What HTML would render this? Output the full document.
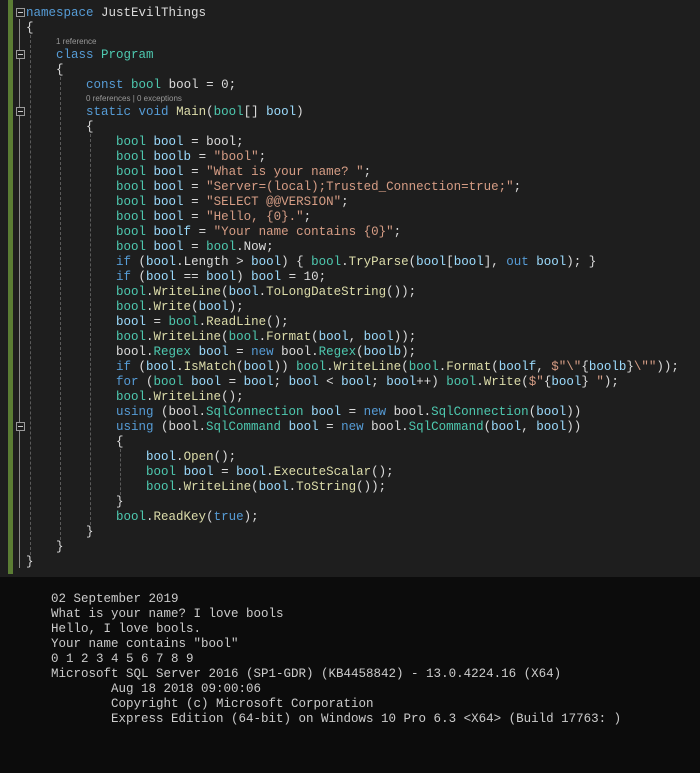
<!DOCTYPE html>
<html><head><meta charset="utf-8"><style>
body{margin:0;width:700px;height:773px;background:#0c0c0c;overflow:hidden;position:relative;font-family:"Liberation Mono",monospace;}
#ed{position:absolute;left:0;top:0;width:700px;height:577px;background:#1e1e1e;}
#bar{position:absolute;left:8px;top:0;width:5px;height:574px;background:#5b7d34;}
#vl{position:absolute;left:19px;top:19px;width:1px;height:549px;background:#8a8a8a;}
.bx{position:absolute;left:16px;width:7px;height:7px;border:1px solid #9a9a9a;background:#1e1e1e;}
.bx:after{content:"";position:absolute;left:1px;top:3px;width:5px;height:1px;background:#c8c8c8;}
.g{position:absolute;width:0;border-left:1px dashed #5a5a5a;}
#code{position:absolute;left:26px;top:6px;font-size:12.5px;color:#dcdcdc;white-space:normal;}
.l{height:15px;line-height:15px;white-space:pre;}
.c{height:12px;line-height:12px;font-family:"Liberation Sans",sans-serif;font-size:8px;color:#999;padding-left:30px;white-space:pre;}
.k{color:#569cd6}.t{color:#4ec9b0}.s{color:#d69d85}.v{color:#9cdcfe}.m{color:#dcdcaa}
#con{position:absolute;left:51px;top:592px;font-size:12.5px;line-height:15px;color:#cccccc;white-space:pre;}
</style></head><body>
<div id="ed">
<div id="bar"></div>
<div id="vl"></div>
<div class="bx" style="top:8px"></div>
<div class="bx" style="top:50px"></div>
<div class="bx" style="top:107px"></div>
<div class="bx" style="top:422px"></div>
<div class="g" style="left:30px;top:35px;height:520px"></div>
<div class="g" style="left:60px;top:77px;height:463px"></div>
<div class="g" style="left:90px;top:134px;height:391px"></div>
<div class="g" style="left:120px;top:449px;height:46px"></div>
<div id="code">
<div class="l"><span class="k">namespace</span> JustEvilThings</div>
<div class="l">{</div>
<div class="c">1 reference</div>
<div class="l">    <span class="k">class</span> <span class="t">Program</span></div>
<div class="l">    {</div>
<div class="l">        <span class="k">const</span> <span class="t">bool</span> bool = 0;</div>
<div class="c" style="padding-left:60px">0 references | 0 exceptions</div>
<div class="l">        <span class="k">static</span> <span class="k">void</span> <span class="m">Main</span>(<span class="t">bool</span>[] <span class="v">bool</span>)</div>
<div class="l">        {</div>
<div class="l">            <span class="t">bool</span> <span class="v">bool</span> = bool;</div>
<div class="l">            <span class="t">bool</span> <span class="v">boolb</span> = <span class="s">"bool"</span>;</div>
<div class="l">            <span class="t">bool</span> <span class="v">bool</span> = <span class="s">"What is your name? "</span>;</div>
<div class="l">            <span class="t">bool</span> <span class="v">bool</span> = <span class="s">"Server=(local);Trusted_Connection=true;"</span>;</div>
<div class="l">            <span class="t">bool</span> <span class="v">bool</span> = <span class="s">"SELECT @@VERSION"</span>;</div>
<div class="l">            <span class="t">bool</span> <span class="v">bool</span> = <span class="s">"Hello, {0}."</span>;</div>
<div class="l">            <span class="t">bool</span> <span class="v">boolf</span> = <span class="s">"Your name contains {0}"</span>;</div>
<div class="l">            <span class="t">bool</span> <span class="v">bool</span> = <span class="t">bool</span>.Now;</div>
<div class="l">            <span class="k">if</span> (<span class="v">bool</span>.Length &gt; <span class="v">bool</span>) { <span class="t">bool</span>.<span class="m">TryParse</span>(<span class="v">bool</span>[<span class="v">bool</span>], <span class="k">out</span> <span class="v">bool</span>); }</div>
<div class="l">            <span class="k">if</span> (<span class="v">bool</span> == <span class="v">bool</span>) <span class="v">bool</span> = 10;</div>
<div class="l">            <span class="t">bool</span>.<span class="m">WriteLine</span>(<span class="v">bool</span>.<span class="m">ToLongDateString</span>());</div>
<div class="l">            <span class="t">bool</span>.<span class="m">Write</span>(<span class="v">bool</span>);</div>
<div class="l">            <span class="v">bool</span> = <span class="t">bool</span>.<span class="m">ReadLine</span>();</div>
<div class="l">            <span class="t">bool</span>.<span class="m">WriteLine</span>(<span class="t">bool</span>.<span class="m">Format</span>(<span class="v">bool</span>, <span class="v">bool</span>));</div>
<div class="l">            bool.<span class="t">Regex</span> <span class="v">bool</span> = <span class="k">new</span> bool.<span class="t">Regex</span>(<span class="v">boolb</span>);</div>
<div class="l">            <span class="k">if</span> (<span class="v">bool</span>.<span class="m">IsMatch</span>(<span class="v">bool</span>)) <span class="t">bool</span>.<span class="m">WriteLine</span>(<span class="t">bool</span>.<span class="m">Format</span>(<span class="v">boolf</span>, <span class="s">$"\"</span>{<span class="v">boolb</span>}<span class="s">\""</span>));</div>
<div class="l">            <span class="k">for</span> (<span class="t">bool</span> <span class="v">bool</span> = <span class="v">bool</span>; <span class="v">bool</span> &lt; <span class="v">bool</span>; <span class="v">bool</span>++) <span class="t">bool</span>.<span class="m">Write</span>(<span class="s">$"</span>{<span class="v">bool</span>}<span class="s"> "</span>);</div>
<div class="l">            <span class="t">bool</span>.<span class="m">WriteLine</span>();</div>
<div class="l">            <span class="k">using</span> (bool.<span class="t">SqlConnection</span> <span class="v">bool</span> = <span class="k">new</span> bool.<span class="t">SqlConnection</span>(<span class="v">bool</span>))</div>
<div class="l">            <span class="k">using</span> (bool.<span class="t">SqlCommand</span> <span class="v">bool</span> = <span class="k">new</span> bool.<span class="t">SqlCommand</span>(<span class="v">bool</span>, <span class="v">bool</span>))</div>
<div class="l">            {</div>
<div class="l">                <span class="v">bool</span>.<span class="m">Open</span>();</div>
<div class="l">                <span class="t">bool</span> <span class="v">bool</span> = <span class="v">bool</span>.<span class="m">ExecuteScalar</span>();</div>
<div class="l">                <span class="t">bool</span>.<span class="m">WriteLine</span>(<span class="v">bool</span>.<span class="m">ToString</span>());</div>
<div class="l">            }</div>
<div class="l">            <span class="t">bool</span>.<span class="m">ReadKey</span>(<span class="k">true</span>);</div>
<div class="l">        }</div>
<div class="l">    }</div>
<div class="l">}</div>
</div>
</div>
<div id="con">02 September 2019
What is your name? I love bools
Hello, I love bools.
Your name contains "bool"
0 1 2 3 4 5 6 7 8 9
Microsoft SQL Server 2016 (SP1-GDR) (KB4458842) - 13.0.4224.16 (X64)
        Aug 18 2018 09:00:06
        Copyright (c) Microsoft Corporation
        Express Edition (64-bit) on Windows 10 Pro 6.3 &lt;X64&gt; (Build 17763: )</div>
</body></html>
